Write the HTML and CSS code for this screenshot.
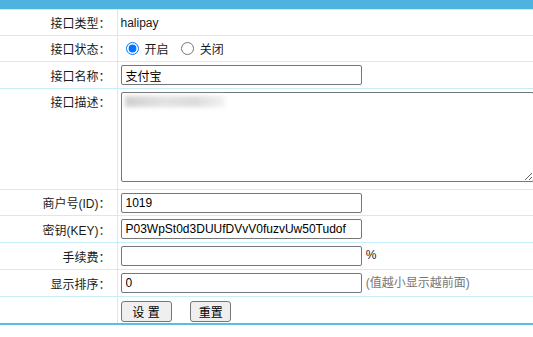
FILE: index.html
```html
<!DOCTYPE html>
<html>
<head>
    <meta charset="utf-8"/>
    <title>接口设置</title>
    <link rel="stylesheet" href="styles.css">
</head>
<body>
<div class="top-bar"></div>
<form>
<table class="form-table">
    <colgroup>
        <col class="col-label">
        <col>
    </colgroup>
    <tr class="h26">
        <td class="label">接口类型：</td>
        <td class="field">halipay</td>
    </tr>
    <tr class="h26">
        <td class="label">接口状态：</td>
        <td class="field">
            <label class="radio"><input type="radio" name="status" checked> 开启</label>
            <label class="radio"><input type="radio" name="status"> 关闭</label>
        </td>
    </tr>
    <tr class="h27">
        <td class="label">接口名称：</td>
        <td class="field"><input type="text" class="txt" value="支付宝"></td>
    </tr>
    <tr class="h98">
        <td class="label top">接口描述：</td>
        <td class="field top">
            <div class="area-wrap">
                <textarea class="area"></textarea>
                <div class="blur"></div>
            </div>
        </td>
    </tr>
    <tr class="h26">
        <td class="label">商户号(ID)：</td>
        <td class="field"><input type="text" class="txt" value="1019"></td>
    </tr>
    <tr class="h27">
        <td class="label">密钥(KEY)：</td>
        <td class="field"><input type="text" class="txt" value="P03WpSt0d3DUUfDVvV0fuzvUw50Tudof"></td>
    </tr>
    <tr class="h27">
        <td class="label">手续费：</td>
        <td class="field"><input type="text" class="txt" value=""> <span class="unit">%</span></td>
    </tr>
    <tr class="h27">
        <td class="label">显示排序：</td>
        <td class="field"><input type="text" class="txt" value="0"> <span class="tip">(值越小显示越前面)</span></td>
    </tr>
    <tr class="h27">
        <td class="label"></td>
        <td class="field">
            <button type="button" class="btn btn-save">设 置</button>
            <button type="reset" class="btn btn-reset">重置</button>
        </td>
    </tr>
</table>
</form>
<div class="bottom-line"></div>
</body>
</html>
```

FILE: styles.css
```css
html, body {
    margin: 0;
    padding: 0;
    background: #fff;
    overflow: hidden;
}

body {
    font-family: "Liberation Sans", "Noto Sans CJK SC", sans-serif;
    font-size: 12px;
    color: #1a1a1a;
}

.top-bar {
    height: 9px;
    background: #4fb3df;
}

.form-table {
    width: 100%;
    table-layout: fixed;
    border-collapse: collapse;
    border-spacing: 0;
}

.col-label {
    width: 117px;
}

.form-table td {
    border: 1px solid #c8eefb;
    padding: 0;
    overflow: hidden;
}

.form-table td:first-child {
    border-left: 0;
}

.form-table td:last-child {
    border-right: 0;
}

.form-table tr:last-child td {
    border-bottom: 0;
}

.h26 td { height: 25px; }
.h27 td { height: 26px; }
.h98 td { height: 96px; }

.label {
    padding-right: 6px !important;
    text-align: right;
    white-space: nowrap;
}

.label.top {
    vertical-align: top;
    padding-top: 4px !important;
}

.field {
    padding-left: 3px !important;
    white-space: nowrap;
}

.field.top {
    vertical-align: top;
}

.radio {
    display: inline-flex;
    align-items: center;
    margin-right: 4px;
}

.radio input {
    width: 13px;
    height: 13px;
    margin: 0 6px 0 5px;
    accent-color: #0075ff;
}

.txt {
    box-sizing: border-box;
    width: 241px;
    height: 20px;
    margin: 0;
    padding: 0 4px;
    border: 1px solid #767676;
    border-radius: 2px;
    font-family: "Liberation Sans", "Noto Sans CJK SC", sans-serif;
    font-size: 12px;
    color: #000;
    vertical-align: middle;
}

.unit {
    margin-left: 1px;
}

.tip {
    color: #777;
    margin-left: 1px;
}

.area-wrap {
    position: relative;
    width: 413px;
    height: 90px;
    margin: 3px 0 0 0;
}

.area {
    box-sizing: border-box;
    width: 413px;
    height: 90px;
    margin: 0;
    border: 1px solid #767676;
    border-radius: 2px;
    display: block;
}

.blur {
    position: absolute;
    left: 4px;
    top: 4px;
    width: 100px;
    height: 11px;
    background: linear-gradient(to right, #d0d0d0, #e2e2e2 40%, #dcdcdc 70%, #f2f2f2);
    filter: blur(2px);
}

.btn {
    box-sizing: border-box;
    height: 21px;
    margin: 3px 0 0 0;
    padding: 0 8px;
    border: 1px solid #767676;
    border-radius: 3px;
    background: #efefef;
    font-family: "Liberation Sans", "Noto Sans CJK SC", sans-serif;
    font-size: 12px;
    color: #000;
}

.btn-save {
    width: 51px;
}

.btn-reset {
    width: 41px;
    margin-left: 15px;
}

.bottom-line {
    height: 2px;
    background: #5bbde6;
}
```
